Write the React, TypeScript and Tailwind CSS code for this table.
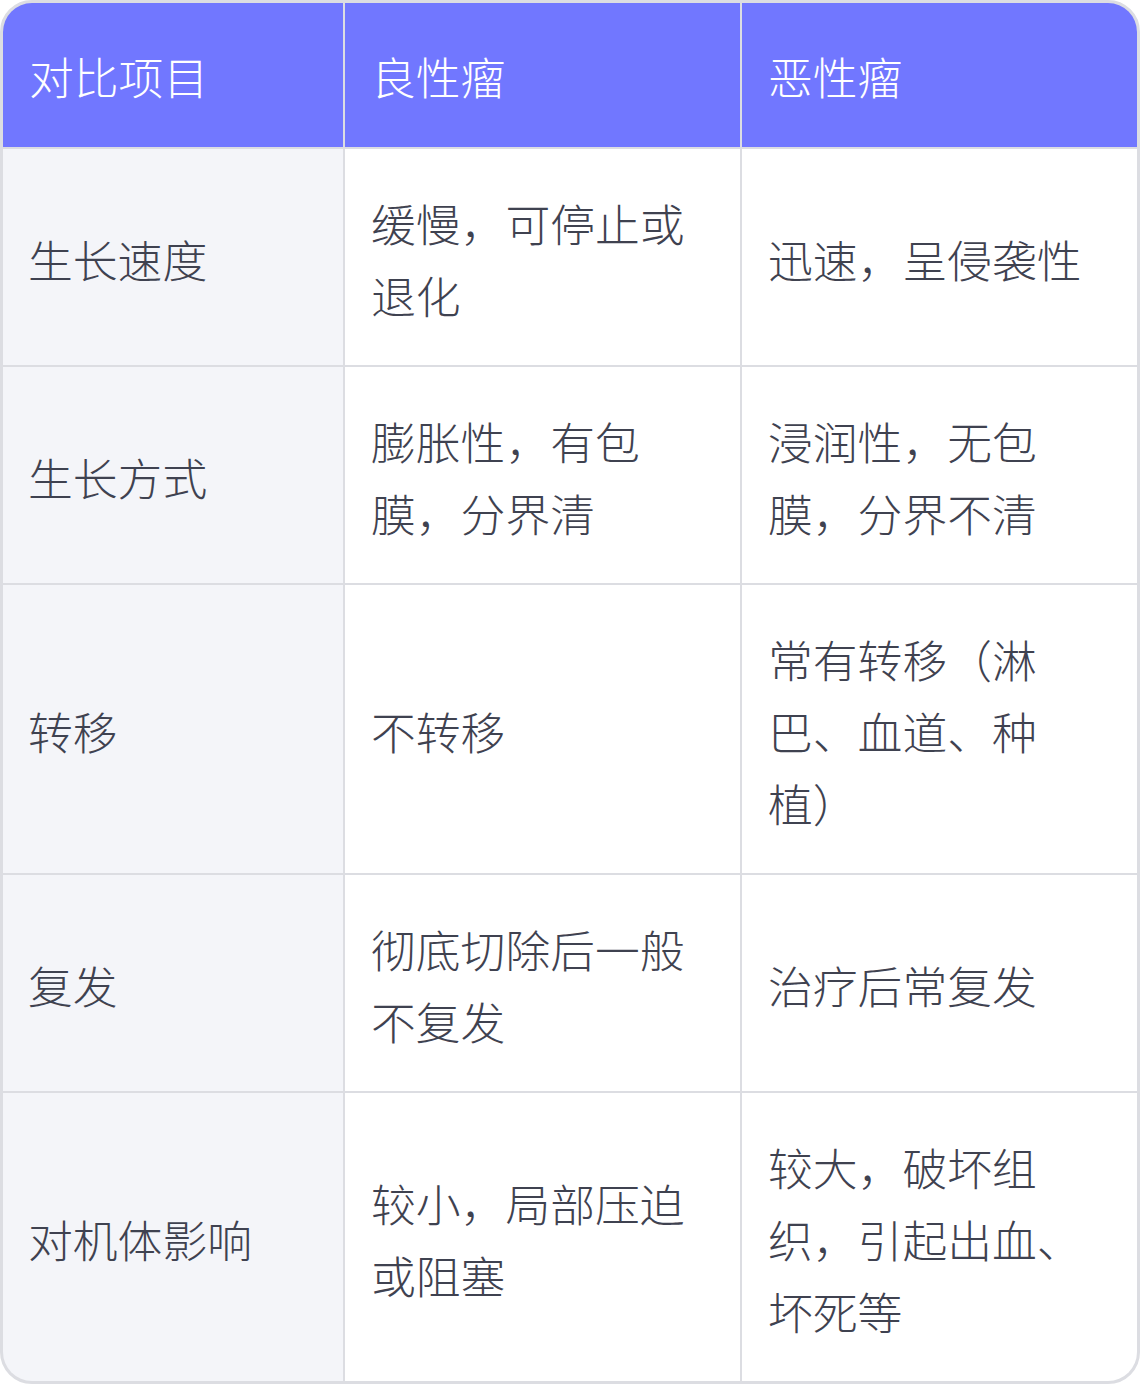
const rows = [
  ['生长速度', '缓慢，可停止或退化', '迅速，呈侵袭性'],
  ['生长方式', '膨胀性，有包膜，分界清', '浸润性，无包膜，分界不清'],
  ['转移', '不转移', '常有转移（淋巴、血道、种植）'],
  ['复发', '彻底切除后一般不复发', '治疗后常复发'],
  ['对机体影响', '较小，局部压迫或阻塞', '较大，破坏组织，引起出血、坏死等'],
]

const headers = ['对比项目', '良性瘤', '恶性瘤']

export default function App() {
  return (
    <div className="w-[1140px] bg-white font-['Noto_Sans_CJK_SC',sans-serif] text-[44.8px] font-light leading-[72px] [text-spacing-trim:space-all]">
      <div className="overflow-hidden rounded-[32px] border-[3px] border-[#dcdde2] bg-[#dcdde2]">
        <div className="grid grid-cols-[340px_395px_395px] gap-[2px]">
          {headers.map((h) => (
            <div key={h} className="flex items-center bg-[#7177ff] pl-[26px] pr-[28px] pt-[37px] pb-[35px] text-white">
              {h}
            </div>
          ))}
          {rows.map((r) => (
            <>
              <div key={r[0]} className="flex items-center bg-[#f4f5f9] pl-[25px] pr-[28px] pt-[38px] pb-[34px] text-[#3f4250]">
                {r[0]}
              </div>
              <div className="flex items-center bg-white pl-[26px] pr-[28px] pt-[38px] pb-[34px] text-[#3f4250]">
                {r[1]}
              </div>
              <div className="flex items-center bg-white pl-[26px] pr-[40px] pt-[38px] pb-[34px] text-[#3f4250]">
                {r[2]}
              </div>
            </>
          ))}
        </div>
      </div>
    </div>
  )
}
